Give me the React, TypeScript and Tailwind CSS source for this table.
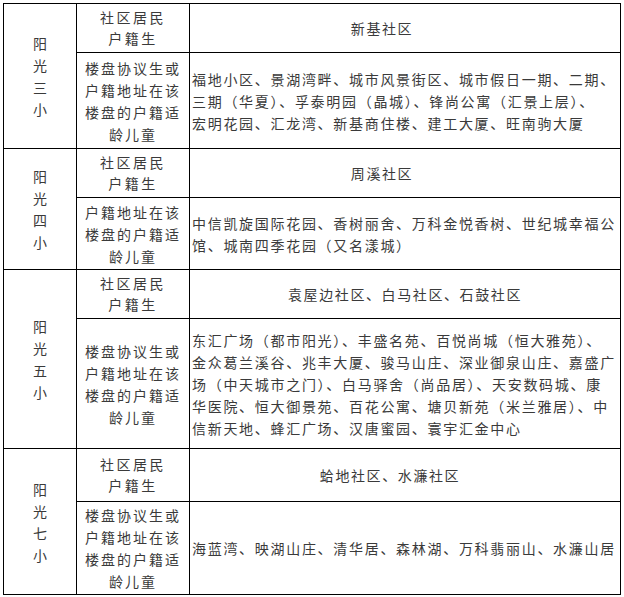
const LABEL_HUJI = ["社区居民", "户籍生"];
const LABEL_LOUPAN = ["楼盘协议生或", "户籍地址在该", "楼盘的户籍适", "龄儿童"];

type Group = {
  school: string;
  communities: string;
  shift: string;
  headH: string;
  bodyH: string;
  label: string[];
  estates: string[];
};

const GROUPS: Group[] = [
  {
    school: "阳光三小",
    communities: "新基社区",
    shift: "pr-[46px]",
    headH: "h-[49px]",
    bodyH: "h-[96px]",
    label: LABEL_LOUPAN,
    estates: [
      "福地小区、景湖湾畔、城市风景街区、城市假日一期、二期、",
      "三期（华夏）、孚泰明园（晶城）、锋尚公寓（汇景上层）、",
      "宏明花园、汇龙湾、新基商住楼、建工大厦、旺南驹大厦",
    ],
  },
  {
    school: "阳光四小",
    communities: "周溪社区",
    shift: "pr-[46px]",
    headH: "h-[49px]",
    bodyH: "h-[72px]",
    label: ["户籍地址在该", "楼盘的户籍适", "龄儿童"],
    estates: [
      "中信凯旋国际花园、香树丽舍、万科金悦香树、世纪城幸福公",
      "馆、城南四季花园（又名漾城）",
    ],
  },
  {
    school: "阳光五小",
    communities: "袁屋边社区、白马社区、石鼓社区",
    shift: "",
    headH: "h-[49px]",
    bodyH: "h-[130px]",
    label: LABEL_LOUPAN,
    estates: [
      "东汇广场（都市阳光）、丰盛名苑、百悦尚城（恒大雅苑）、",
      "金众葛兰溪谷、兆丰大厦、骏马山庄、深业御泉山庄、嘉盛广",
      "场（中天城市之门）、白马驿舍（尚品居）、天安数码城、康",
      "华医院、恒大御景苑、百花公寓、塘贝新苑（米兰雅居）、中",
      "信新天地、蜂汇广场、汉唐蜜园、寰宇汇金中心",
    ],
  },
  {
    school: "阳光七小",
    communities: "蛤地社区、水濂社区",
    shift: "pr-[30px]",
    headH: "h-[53px]",
    bodyH: "h-[93px]",
    label: LABEL_LOUPAN,
    estates: ["海蓝湾、映湖山庄、清华居、森林湖、万科翡丽山、水濂山居"],
  },
];

function Lines({ lines, className }: { lines: string[]; className?: string }) {
  return (
    <div className={className}>
      {lines.map((l) => (
        <div key={l} className="whitespace-nowrap">
          {l}
        </div>
      ))}
    </div>
  );
}

export default function App() {
  return (
    <div className="min-h-[597px] w-[624px] bg-white pl-[3px] pt-[3px] font-['SimSun','Noto_Sans_CJK_SC',sans-serif] text-[14px] text-[#3a3a3a]">
      <table className="w-[617px] table-fixed border-collapse">
        <colgroup>
          <col className="w-[73px]" />
          <col className="w-[113px]" />
          <col className="w-[431px]" />
        </colgroup>
        <tbody>
          {GROUPS.map((g) => [
            <tr key={g.school + "-a"} className={g.headH}>
              <td rowSpan={2} className="border border-black p-0 align-middle">
                <div className="flex flex-col items-center leading-[22px]">
                  {g.school.split("").map((c, i) => (
                    <span key={i}>{c}</span>
                  ))}
                </div>
              </td>
              <td className="border border-black p-0 text-center align-middle">
                <Lines lines={LABEL_HUJI} className="leading-[21px] tracking-[2.5px]" />
              </td>
              <td className="border border-black p-0 text-center align-middle">
                <div className={`tracking-[1.6px] ${g.shift}`}>{g.communities}</div>
              </td>
            </tr>,
            <tr key={g.school + "-b"} className={g.bodyH}>
              <td className="border border-black p-0 text-center align-middle">
                <Lines lines={g.label} className="leading-[22px] tracking-[2px]" />
              </td>
              <td className="border border-black py-0 pl-[2px] pr-0 align-middle">
                <Lines lines={g.estates} className="leading-[22px] tracking-[1.7px]" />
              </td>
            </tr>,
          ])}
        </tbody>
      </table>
    </div>
  );
}
